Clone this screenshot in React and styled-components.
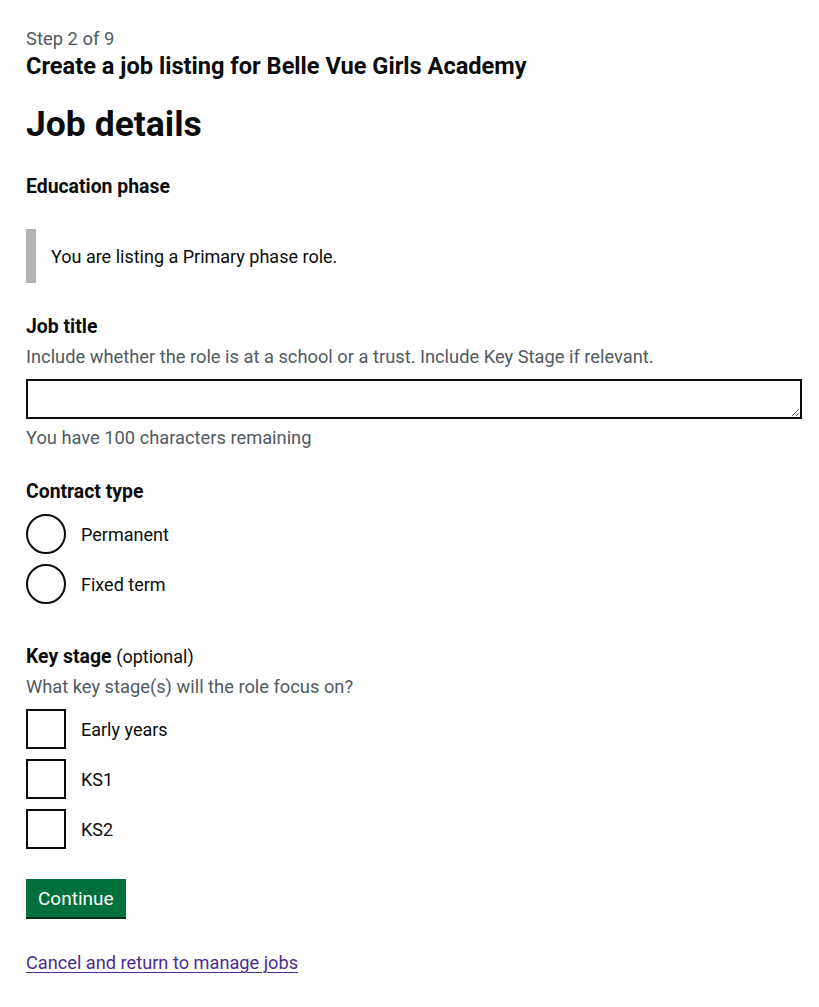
import React from 'react'
import { styled, createGlobalStyle } from 'styled-components'

const GlobalStyle = createGlobalStyle`
  body {
    margin: 0;
    background: #ffffff;
    color: #0b0c0c;
    font-family: Roboto, "Liberation Sans", Arial, sans-serif;
  }
`;

const Page = styled.main`
  padding: 26px 26px 30px;
  display: flex;
  flex-direction: column;
  align-items: flex-start;
`;

const Caption = styled.span`
  font-size: 18.4px;
  line-height: 25px;
  color: #505a5f;
`;

const SubHeading = styled.h2`
  margin: 0;
  font-size: 23.6px;
  line-height: 30px;
  font-weight: 700;
`;

const Title = styled.h1`
  margin: 18px 0 0;
  font-size: 35.5px;
  line-height: 50px;
  font-weight: 700;
`;

const Label = styled.label`
  display: block;
  margin-top: ${({ $top }) => $top || 0}px;
  font-size: 19.4px;
  line-height: 25px;
  font-weight: 700;
`;

const Optional = styled.span`
  font-weight: 400;
  font-size: 18px;
`;

const Hint = styled.div`
  margin-top: ${({ $top }) => $top || 5}px;
  font-size: 18.3px;
  line-height: 25px;
  color: #505a5f;
`;

const Inset = styled.div`
  margin-top: 30px;
  padding: 15px 15px 14px;
  border-left: 10px solid #b1b4b6;
  font-size: 18px;
  line-height: 25px;
`;

const TextArea = styled.textarea`
  margin-top: 10px;
  box-sizing: border-box;
  width: 776px;
  height: 40px;
  border: 2px solid #0b0c0c;
  border-radius: 0;
  padding: 5px;
  font: inherit;
  font-size: 18px;
  resize: vertical;
`;

const Options = styled.div`
  margin-top: 10px;
  display: flex;
  flex-direction: column;
  gap: 10px;
`;

const Option = styled.label`
  display: flex;
  align-items: center;
  gap: 15px;
  font-size: 18px;
  line-height: 25px;
`;

const Control = styled.span`
  box-sizing: border-box;
  width: 40px;
  height: 40px;
  border: 2px solid #0b0c0c;
  border-radius: ${({ $round }) => ($round ? '50%' : '0')};
  background: #fff;
`;

const Button = styled.button`
  margin-top: 30px;
  box-sizing: border-box;
  height: 38px;
  padding: 0 10px;
  border: 2px solid transparent;
  border-radius: 0;
  background: #00703c;
  box-shadow: 0 2px 0 #002d18;
  color: #fff;
  font-family: inherit;
  font-size: 19px;
  line-height: 1;
  cursor: pointer;
`;

const CancelLink = styled.a`
  margin-top: 33px;
  font-size: 18.2px;
  line-height: 25px;
  color: #4c2c92;
  text-decoration: underline;
  text-underline-offset: 3px;
  text-decoration-thickness: 1px;
`;

const radios = ['Permanent', 'Fixed term'];
const stages = ['Early years', 'KS1', 'KS2'];

const App = () => {
  return (
    <>
      <GlobalStyle />
      <Page>
        <Caption>Step 2 of 9</Caption>
        <SubHeading>Create a job listing for Belle Vue Girls Academy</SubHeading>
        <Title>Job details</Title>

        <Label $top={25}>Education phase</Label>
        <Inset>You are listing a Primary phase role.</Inset>

        <Label $top={31}>Job title</Label>
        <Hint>Include whether the role is at a school or a trust. Include Key Stage if relevant.</Hint>
        <TextArea rows={1} />
        <Hint $top={6}>You have 100 characters remaining</Hint>

        <Label $top={29}>Contract type</Label>
        <Options>
          {radios.map((r) => (
            <Option key={r}>
              <Control $round />
              {r}
            </Option>
          ))}
        </Options>

        <Label $top={40}>
          Key stage <Optional>(optional)</Optional>
        </Label>
        <Hint $top={5}>What key stage(s) will the role focus on?</Hint>
        <Options>
          {stages.map((s) => (
            <Option key={s}>
              <Control />
              {s}
            </Option>
          ))}
        </Options>

        <Button>Continue</Button>
        <CancelLink href="#">Cancel and return to manage jobs</CancelLink>
      </Page>
    </>
  )
}

export default App
